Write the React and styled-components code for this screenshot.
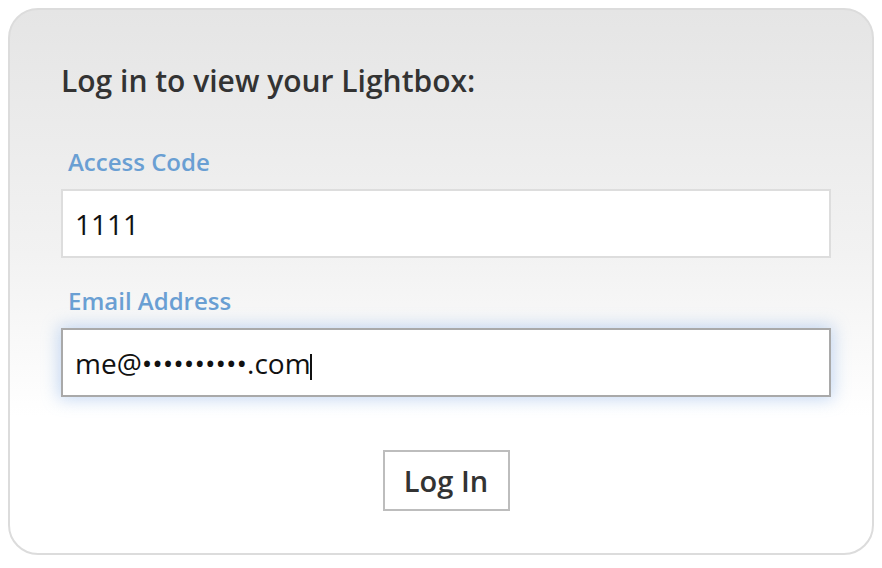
import React, { useState } from "react";
import styled, { createGlobalStyle } from "styled-components";

const GlobalStyle = createGlobalStyle`
  body {
    margin: 8px;
    background: #fff;
    font-family: "Open Sans", "Liberation Sans", sans-serif;
  }
`;

const Card = styled.form`
  box-sizing: border-box;
  width: 866px;
  height: 547px;
  border: 2px solid #dcdcdc;
  border-radius: 30px;
  background: linear-gradient(to bottom, #e5e5e5 0%, #f2f2f2 45%, #ffffff 75%);
  padding: 53px 41px 0 51px;
  display: flex;
  flex-direction: column;
`;

const Title = styled.h2`
  margin: 0 0 47px;
  font-size: 30px;
  line-height: 36px;
  font-weight: 600;
  color: #333;
`;

const Label = styled.label`
  display: block;
  margin: 0 0 11px 7px;
  font-size: 24px;
  line-height: 32px;
  font-weight: 600;
  color: #6a9fd3;
`;

const Field = styled.div`
  margin-bottom: 27px;
`;

const InputWrap = styled.div`
  position: relative;
  width: 770px;
`;

const Input = styled.input`
  box-sizing: border-box;
  width: 770px;
  height: 69px;
  padding: 0 12px;
  font-family: "Open Sans", "Liberation Sans", sans-serif;
  font-size: 28px;
  color: #111;
  background: #fff;
  border: 2px solid ${p => (p.$focused ? "#a9a9a9" : "#dddddd")};
  box-shadow: ${p => (p.$focused ? "0 0 16px 2px rgba(110, 160, 230, 0.4)" : "none")};
  outline: none;
  caret-color: transparent;
`;

// fake text caret, the screenshot shows the email field focused
const Caret = styled.span`
  position: absolute;
  left: ${p => p.$left}px;
  top: 26px;
  width: 2px;
  height: 26px;
  background: #111;
  pointer-events: none;
`;

const Actions = styled.div`
  display: flex;
  justify-content: center;
  width: 770px;
  margin-top: 26px;
`;

const Button = styled.button`
  box-sizing: border-box;
  width: 127px;
  height: 61px;
  padding: 0;
  background: #fff;
  border: 2px solid #bdbdbd;
  font-family: "Open Sans", "Liberation Sans", sans-serif;
  font-size: 29px;
  font-weight: 600;
  color: #333;
  cursor: pointer;
`;

export default function App() {
  const [code, setCode] = useState("1111");
  const [email, setEmail] = useState("me@••••••••••.com");

  return (
    <>
      <GlobalStyle />
      <Card onSubmit={e => e.preventDefault()}>
        <Title>Log in to view your Lightbox:</Title>
        <Field>
          <Label>Access Code</Label>
          <InputWrap>
            <Input value={code} onChange={e => setCode(e.target.value)} />
          </InputWrap>
        </Field>
        <Field>
          <Label>Email Address</Label>
          <InputWrap>
            <Input
              $focused
              value={email}
              onChange={e => setEmail(e.target.value)}
            />
            <Caret $left={249} />
          </InputWrap>
        </Field>
        <Actions>
          <Button type="submit">Log In</Button>
        </Actions>
      </Card>
    </>
  );
}
